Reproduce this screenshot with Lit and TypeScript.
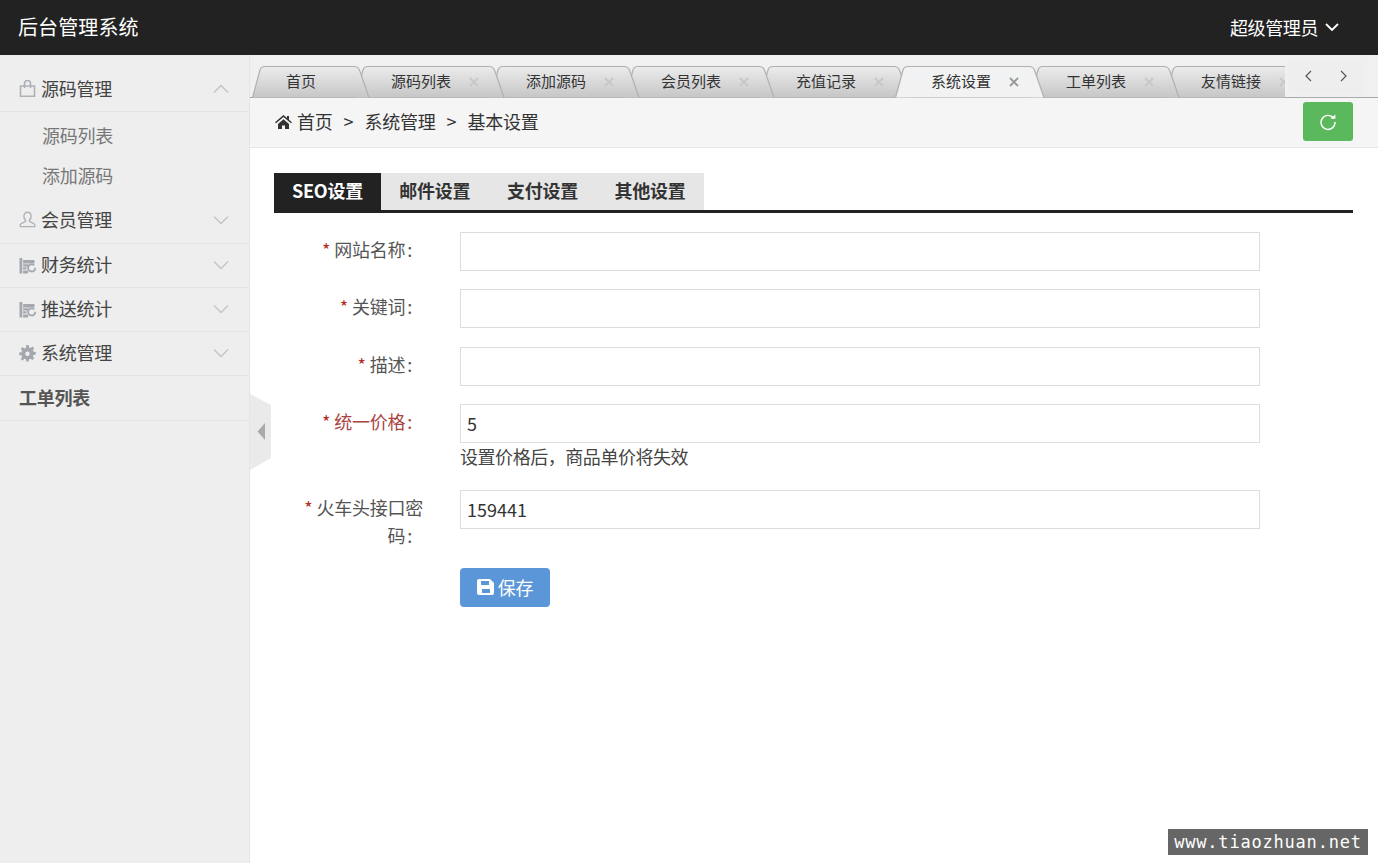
import { LitElement, html, css, svg } from "lit";
import { customElement } from "lit/decorators.js";

const chev = (up: boolean) => html`<svg class="chev" width="16" height="10" viewBox="0 0 16 10"><path d=${up ? "M1 8.5 8 1.5l7 7" : "M1 1.5l7 7 7-7"} fill="none" stroke="#c4c4c4" stroke-width="1.4"/></svg>`;

const icons: Record<string, unknown> = {
  bag: svg`<path d="M1 6h14v10.2H1zM5 8V3.5a3 3 0 0 1 6 0V8" fill="none" stroke="#adb1b7" stroke-width="1.6"/>`,
  user: svg`<path d="M8 1.2c-2.4 0-3.6 1.8-3.6 4 0 1.8.8 3 1.6 3.8v1.4L1.2 13c-.6.4-.7 2.2-.2 2.6h14c.5-.4.4-2.2-.2-2.6L10 10.4V9c.8-.8 1.6-2 1.6-3.8 0-2.2-1.2-4-3.6-4z" fill="none" stroke="#adb1b7" stroke-width="1.4"/>`,
  fin: svg`<path d="M0 1h2.8v15.5H0zM3.6 3H15v3.4H3.6zM3.6 7.2H9v2.2H3.6zM3.6 10.2H7v2.4H3.6zM3.6 13.4h5v3H3.6z" fill="#a4a8ae"/><path d="M15.8 10.8a3.6 3.6 0 1 1-1.1-2.5" fill="none" stroke="#a4a8ae" stroke-width="1.8"/>`,
  gear: svg`<path d="M6.8 0h2.4l.4 2.3 1.5.6 1.9-1.3 1.7 1.7-1.3 1.9.6 1.5 2.3.4v2.4l-2.3.4-.6 1.5 1.3 1.9-1.7 1.7-1.9-1.3-1.5.6-.4 2.3H6.8l-.4-2.3-1.5-.6L3 15.7 1.3 14l1.3-1.9-.6-1.5L-.3 10V7.6L2 7.2l.6-1.5L1.3 3.8 3 2.1l1.9 1.3 1.5-.6z" fill="#a4a8ae"/><circle cx="8" cy="8.8" r="2.2" fill="#eee"/>`,
};

const navIcon = (k: string) => html`<svg class="nav-ic" width="17" height="17" viewBox="0 0 16 17">${icons[k]}</svg>`;

const tabs: [string, boolean][] = [
  ["首页", false],
  ["源码列表", false],
  ["添加源码", false],
  ["会员列表", false],
  ["充值记录", false],
  ["系统设置", true],
  ["工单列表", false],
  ["友情链接", false],
];

const tabShape = (w: number, active: boolean, i: number) => html`<svg class="tab-bg" width=${w} height="33" viewBox="0 0 ${w} 33">
  <defs><linearGradient id="g${i}" x1="0" y1="0" x2="0" y2="1">
    <stop offset="0" stop-color=${active ? "#f1f2f3" : "#ececed"}/>
    <stop offset="1" stop-color=${active ? "#f2f2f3" : "#c6c6c7"}/>
  </linearGradient></defs>
  <path d="M.5 32.5 8 5Q9 1.5 13 1.5H${w - 16}Q${w - 12} 1.5 ${w - 10.5} 5L${w - 1} 32.5Z" fill="url(#g${i})"/>
  <path d="M.5 32.5 8 5Q9 1.5 13 1.5H${w - 16}Q${w - 12} 1.5 ${w - 10.5} 5L${w - 1} 32.5" fill="none" stroke="#b0b0b0" stroke-width="1.2"/>
</svg>`;

const fields = ["网站名称", "关键词", "描述"];

@customElement("app-root")
export class AppRoot extends LitElement {
  static styles = css`
    :host { display: block; height: 863px; overflow: hidden; font-family: "Noto Sans CJK SC", "Liberation Sans", sans-serif; background: #fff; position: relative; }
    * { box-sizing: border-box; }
    .top { height: 55px; background: #222; color: #fff; display: flex; align-items: center; justify-content: space-between; padding: 0 39px 2px 18px; }
    .brand { font-size: 20px; line-height: 30px; letter-spacing: 0.1px; }
    .user { font-size: 18px; display: flex; align-items: center; gap: 7px; letter-spacing: -0.4px; }
    .user svg { margin-top: 2px; }
    .body { display: flex; height: 808px; }
    .side { width: 250px; flex: none; background: #eee; border-right: 1px solid #e5e5e5; padding-top: 12px; }
    .nav { height: 45px; display: flex; align-items: center; padding: 0 20px 1px 19px; border-bottom: 1px solid #e3e3e3; font-size: 18px; color: #444; line-height: 24px; letter-spacing: -0.25px; }
    .nav.short { height: 44px; }
    .nav.tight { padding-bottom: 3px; }
    .nav-ic { margin-right: 5px; flex: none; }
    .nav span { flex: 1; margin-bottom: 2px; }
    .nav.bold { font-weight: 700; color: #555; }
    .sub { padding: 5px 0 2px 42px; }
    .sub div { height: 40px; line-height: 37px; font-size: 18px; color: #777; letter-spacing: -0.25px; }
    .main { flex: 1; min-width: 0; position: relative; }
    .strip { height: 43px; background: #f0f0f0; border-bottom: 1px solid #aaa; position: relative; padding: 10px 0 0 2px; }
    .tabs { display: flex; width: 1033px; overflow: hidden; height: 33px; }
    .tab { position: relative; flex: none; height: 33px; margin-right: -15px; font-size: 15px; color: #333; }
    .tab-bg { position: absolute; left: 0; top: 0; }
    .tab-t { position: absolute; left: 36px; top: 0; line-height: 31px; white-space: nowrap; }
    .tab.first .tab-t { left: 34px; }
    .tab-x { position: absolute; top: 12px; left: 114px; }
    .pager { position: absolute; left: 1039px; top: 5px; width: 74px; height: 33px; background: #eee; border-radius: 3px; display: flex; align-items: center; justify-content: center; gap: 28px; padding: 0 0 2px; z-index: 20; }
    .crumb { height: 50px; background: #f5f5f5; border-bottom: 1px solid #e6e6e6; display: flex; align-items: center; padding: 0 25px 3px 25px; font-size: 18px; color: #333; letter-spacing: -0.2px; }
    .home { margin: 2px 5px 0 0; }
    .gt { margin: 0 11px; }
    .refresh { margin-left: auto; align-self: flex-start; margin-top: 4px; width: 50px; height: 39px; background: #5cb85c; border-radius: 3px; display: flex; align-items: center; justify-content: center; }
    .content { padding: 25px 25px 0 24px; }
    .tabbar { display: flex; height: 40px; border-bottom: 3px solid #222; }
    .tb { height: 37px; line-height: 35px; background: #e6e6e6; font-size: 18px; font-weight: 700; color: #333; padding: 0 18.3px; letter-spacing: -0.25px; }
    .tb.on { background: #222; color: #fff; height: 40px; width: 107px; padding: 0 0 0 18px; }
    .form { padding-top: 18.75px; }
    .row { display: flex; margin-bottom: 18.5px; }
    .row.last { margin-bottom: 19px; }
    .lab { width: 186px; flex: none; padding-right: 48px; text-align: right; font-size: 18px; line-height: 28px; color: #555; padding-top: 3px; letter-spacing: -0.25px; }
    .lab i { color: #b52b27; font-style: normal; margin-right: 4px; }
    .lab.red { color: #a94442; }
    .lab .colon { margin-left: 2px; }
    .lab .l1 { display: block; margin-right: -11px; white-space: nowrap; }
    .box { width: 800px; height: 39px; border: 1px solid #ddd; padding: 0 6px; font-size: 18px; line-height: 36px; color: #333; background: #fff; }
    .hint { font-size: 18px; line-height: 27px; height: 28px; color: #444; letter-spacing: -0.45px; }
    .save { margin-left: 186px; width: 90px; height: 39px; background: #5b97d8; border-radius: 4px; color: #fff; font-size: 18px; display: flex; align-items: center; justify-content: center; gap: 3px; letter-spacing: -0.25px; }
    .handle { position: absolute; left: 0; top: 339px; }
    .mark { position: absolute; left: 1168px; top: 829px; width: 200px; height: 26px; background: #666; color: #fff; font-family: "DejaVu Sans Mono", monospace; font-size: 17px; line-height: 26px; letter-spacing: 0.8px; text-align: center; white-space: nowrap; }
  `;

  render() {
    return html`
      <div class="top">
        <div class="brand">后台管理系统</div>
        <div class="user">超级管理员
          <svg width="14" height="9" viewBox="0 0 14 9"><path d="M1 1l6 6 6-6" fill="none" stroke="#fff" stroke-width="1.9"/></svg>
        </div>
      </div>
      <div class="body">
        <aside class="side">
          <div class="nav">${navIcon("bag")}<span>源码管理</span>${chev(true)}</div>
          <div class="sub"><div>源码列表</div><div>添加源码</div></div>
          <div class="nav tight">${navIcon("user")}<span>会员管理</span>${chev(false)}</div>
          <div class="nav short">${navIcon("fin")}<span>财务统计</span>${chev(false)}</div>
          <div class="nav short">${navIcon("fin")}<span>推送统计</span>${chev(false)}</div>
          <div class="nav short">${navIcon("gear")}<span>系统管理</span>${chev(false)}</div>
          <div class="nav bold"><span>工单列表</span></div>
        </aside>
        <main class="main">
          <div class="strip">
            <div class="tabs">
              ${tabs.map(([t, on], i) => {
                const w = i === 0 ? 118 : 150;
                const z = on ? 10 : 9 - i;
                return html`<div class="tab ${i === 0 ? "first" : ""}" style="width:${w}px;z-index:${z}">
                  ${tabShape(w, on, i)}
                  <span class="tab-t">${t}</span>
                  ${i > 0 ? html`<svg class="tab-x" width="10" height="10" viewBox="0 0 10 10"><path d="M1 1l8 8M9 1l-8 8" stroke=${on ? "#999" : "#c8c8c8"} stroke-width="1.9"/></svg>` : ""}
                </div>`;
              })}
            </div>
            <div class="pager">
              <svg width="8" height="12" viewBox="0 0 8 12"><path d="M7 1 2 6l5 5" fill="none" stroke="#555" stroke-width="1.2"/></svg>
              <svg width="8" height="12" viewBox="0 0 8 12"><path d="M1 1l5 5-5 5" fill="none" stroke="#555" stroke-width="1.2"/></svg>
            </div>
          </div>
          <div class="crumb">
            <svg class="home" width="17" height="14" viewBox="0 0 17 14"><path d="M8.5 0 0 7.2l1 1.1L8.5 2 16 8.3l1-1.1-3-2.5V1h-2v2L8.5 0zM3 9v5h4v-3.5h3V14h4V9L8.5 4.3 3 9z" fill="#333"/></svg>
            首页<span class="gt">&gt;</span>系统管理<span class="gt">&gt;</span>基本设置
            <div class="refresh"><svg width="18" height="18" viewBox="0 0 18 18"><path d="M14.6 5.2A7 7 0 1 0 16 9" fill="none" stroke="#fff" stroke-width="1.4"/><path d="M11.4 5.8h5V1.6z" fill="#fff"/></svg></div>
          </div>
          <div class="content">
            <div class="tabbar">
              <div class="tb on">SEO设置</div>
              <div class="tb">邮件设置</div>
              <div class="tb">支付设置</div>
              <div class="tb">其他设置</div>
            </div>
            <div class="form">
              ${fields.map((f) => html`<div class="row">
                <div class="lab"><i>*</i>${f}<span class="colon">:</span></div>
                <div class="box"></div>
              </div>`)}
              <div class="row">
                <div class="lab red"><i>*</i>统一价格<span class="colon">:</span></div>
                <div><div class="box">5</div><div class="hint">设置价格后，商品单价将失效</div></div>
              </div>
              <div class="row last">
                <div class="lab"><span class="l1"><i>*</i>火车头接口密</span>码<span class="colon">:</span></div>
                <div class="box">159441</div>
              </div>
              <div class="save">
                <svg width="18" height="18" viewBox="0 0 18 18"><path d="M2 1h11l4 4v10a2 2 0 0 1-2 2H2a2 2 0 0 1-2-2V3a2 2 0 0 1 2-2zm2 2v4h8V3H4zm1 8v4h8v-4H5z" fill="#fff" fill-rule="evenodd"/></svg>
                保存
              </div>
            </div>
          </div>
          <svg class="handle" width="22" height="76" viewBox="0 0 22 76"><path d="M0 0l21 11v53L0 76z" fill="#eaeaea"/><path d="M15 29 7.5 37.5 15 46z" fill="#aaa"/></svg>
        </main>
      </div>
      <div class="mark">www.tiaozhuan.net</div>
    `;
  }
}
